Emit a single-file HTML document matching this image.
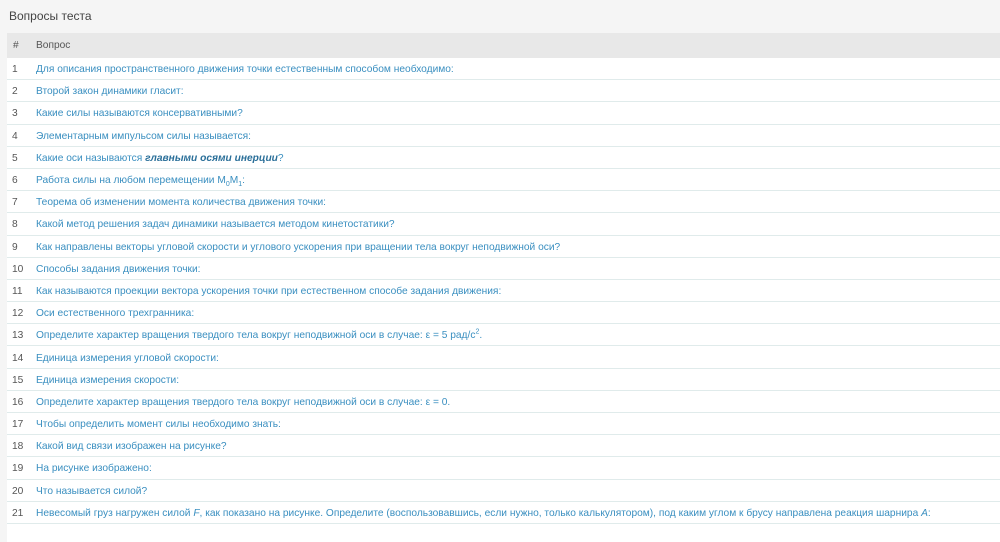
<!DOCTYPE html>
<html><head><meta charset="utf-8"><style>
body{margin:0;background:#f5f5f5;font-family:"Liberation Sans",sans-serif;width:1000px;height:542px;overflow:hidden}
h1{font-weight:normal;font-size:12px;color:#444;margin:0;position:absolute;left:9px;top:9px}
.panel{position:absolute;left:7px;top:33px;right:0;bottom:0;background:#fff}
table{border-collapse:collapse;width:100%;font-size:10.2px}
th{background:#e8e8e8;color:#555;font-weight:normal;text-align:left;height:24px;padding:1px 0 0 0;line-height:12px}
td{height:18.2px;border-bottom:1px solid #e0ebeb;padding:3px 0 0 0;color:#3a8fc0;vertical-align:middle;line-height:12px}
td.n{color:#555;width:24px;padding-left:5px}
th.n{padding-left:6px;width:23px}
sub,sup{font-size:7px;line-height:0}
</style></head><body>
<h1>Вопросы теста</h1>
<div class="panel"><table>
<tr><th class="n">#</th><th>Вопрос</th></tr>
<tr><td class="n">1</td><td>Для описания пространственного движения точки естественным способом необходимо:</td></tr>
<tr><td class="n">2</td><td>Второй закон динамики гласит:</td></tr>
<tr><td class="n">3</td><td>Какие силы называются консервативными?</td></tr>
<tr><td class="n">4</td><td>Элементарным импульсом силы называется:</td></tr>
<tr><td class="n">5</td><td>Какие оси называются <b><i style="color:#2a6f99">главными осями инерции</i></b>?</td></tr>
<tr><td class="n">6</td><td>Работа силы на любом перемещении M<sub>0</sub>M<sub>1</sub>:</td></tr>
<tr><td class="n">7</td><td>Теорема об изменении момента количества движения точки:</td></tr>
<tr><td class="n">8</td><td>Какой метод решения задач динамики называется методом кинетостатики?</td></tr>
<tr><td class="n">9</td><td>Как направлены векторы угловой скорости и углового ускорения при вращении тела вокруг неподвижной оси?</td></tr>
<tr><td class="n">10</td><td>Способы задания движения точки:</td></tr>
<tr><td class="n">11</td><td>Как называются проекции вектора ускорения точки при естественном способе задания движения:</td></tr>
<tr><td class="n">12</td><td>Оси естественного трехгранника:</td></tr>
<tr><td class="n">13</td><td>Определите характер вращения твердого тела вокруг неподвижной оси в случае: ε = 5 рад/с<sup>2</sup>.</td></tr>
<tr><td class="n">14</td><td>Единица измерения угловой скорости:</td></tr>
<tr><td class="n">15</td><td>Единица измерения скорости:</td></tr>
<tr><td class="n">16</td><td>Определите характер вращения твердого тела вокруг неподвижной оси в случае: ε = 0.</td></tr>
<tr><td class="n">17</td><td>Чтобы определить момент силы необходимо знать:</td></tr>
<tr><td class="n">18</td><td>Какой вид связи изображен на рисунке?</td></tr>
<tr><td class="n">19</td><td>На рисунке изображено:</td></tr>
<tr><td class="n">20</td><td>Что называется силой?</td></tr>
<tr><td class="n">21</td><td>Невесомый груз нагружен силой <i>F</i>, как показано на рисунке. Определите (воспользовавшись, если нужно, только калькулятором), под каким углом к брусу направлена реакция шарнира <i>A</i>:</td></tr>
</table></div>
</body></html>
